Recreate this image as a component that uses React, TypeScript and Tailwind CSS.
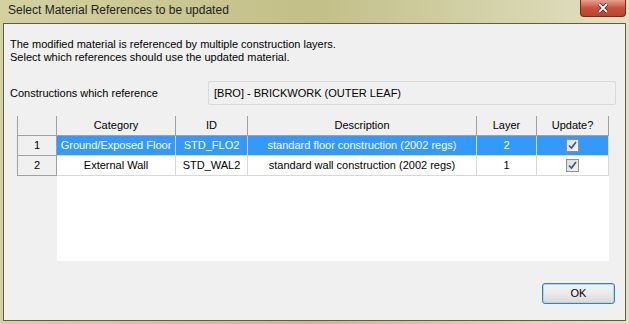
import React from "react"

const font = { fontFamily: '"Liberation Sans", Arial, sans-serif' }

const rows = [
  { n: 1, category: "Ground/Exposed Floor", id: "STD_FLO2", desc: "standard floor construction (2002 regs)", layer: 2, selected: true },
  { n: 2, category: "External Wall", id: "STD_WAL2", desc: "standard wall construction (2002 regs)", layer: 1, selected: false },
]

const Check = () => (
  <span className="inline-flex items-center justify-center w-[13px] h-[13px] border border-[#8f8f8f] bg-gradient-to-br from-[#dcdcdc] to-[#f6f6f6]">
    <svg width="9" height="9" viewBox="0 0 9 9">
      <path d="M1 4.5 L3.5 7 L8 1" fill="none" stroke="#3d4f9a" strokeWidth="1.6" />
    </svg>
  </span>
)

export default function App() {
  return (
    <div
      className="w-[629px] h-[324px] flex flex-col bg-gradient-to-r from-[#d3d1a0] via-[#c2bf88] to-[#e2e1c3] text-[11px] text-black overflow-hidden"
      style={font}
    >
      {/* title bar */}
      <div className="h-[23px] flex items-center justify-between pl-[8px] pr-[3px] shrink-0">
        <span className="text-[12px] text-[#1e1e1e] -mt-[3px]">Select Material References to be updated</span>
        <button className="self-start w-[46px] h-[17px] rounded-b-[4px] border border-[#7a2a1c] border-t-0 bg-gradient-to-b from-[#e5a08e] via-[#c9503a] to-[#b8442f] flex items-center justify-center">
          <svg width="12" height="10" viewBox="0 0 12 10">
            <path d="M2 1 L10 9 M10 1 L2 9" stroke="#4a1a10" strokeWidth="3.2" />
            <path d="M2 1 L10 9 M10 1 L2 9" stroke="#ffffff" strokeWidth="1.8" />
          </svg>
        </button>
      </div>

      {/* client area */}
      <div className="mx-[3px] mb-[3px] flex-1 border border-[#5e5e4c] bg-[#f0f0f0] flex flex-col">
        <div className="pl-[6px] pt-[14px] leading-[13px]">
          <p>The modified material is referenced by multiple construction layers.</p>
          <p>Select which references should use the updated material.</p>
        </div>

        <div className="flex items-center pl-[6px] mt-[17px] pr-[9px]">
          <span className="w-[198px]">Constructions which reference</span>
          <div className="flex-1 h-[24px] border border-[#d9d9d9] rounded-[2px] bg-[#f0f0f0] flex items-center pl-[5px]">
            [BRO] - BRICKWORK (OUTER LEAF)
          </div>
        </div>

        {/* grid */}
        <div className="ml-[13px] mt-[11px] w-[592px] flex flex-col">
          <div className="flex h-[20px]">
            {[
              ["", "w-[40px]"],
              ["Category", "w-[119px]"],
              ["ID", "w-[72px]"],
              ["Description", "w-[229px]"],
              ["Layer", "w-[60px]"],
              ["Update?", "w-[72px]"],
            ].map(([t, w], i) => (
              <div
                key={i}
                className={`${w} border-r border-b border-[#a0a0a0] bg-[#f0f0f0] flex items-center justify-center ${i === 0 ? "border-l" : ""}`}
              >
                {t}
              </div>
            ))}
          </div>
          {rows.map((r) => (
            <div key={r.n} className="flex h-[20px]">
              <div className="w-[40px] border-l border-r border-b border-[#a0a0a0] bg-[#f0f0f0] flex items-center justify-center">
                {r.n}
              </div>
              <div className={`flex ${r.selected ? "bg-[#3399ff] text-white" : "bg-white text-black"}`}>
                <div className="w-[119px] border-r border-b border-[#d8d8d8] flex items-center justify-center">{r.category}</div>
                <div className="w-[72px] border-r border-b border-[#d8d8d8] flex items-center justify-center">{r.id}</div>
                <div className="w-[229px] border-r border-b border-[#d8d8d8] flex items-center justify-center">{r.desc}</div>
                <div className="w-[60px] border-r border-b border-[#d8d8d8] flex items-center justify-center">{r.layer}</div>
                <div className="w-[72px] border-r border-b border-[#d8d8d8] flex items-center justify-center">
                  <Check />
                </div>
              </div>
            </div>
          ))}
          <div className="flex">
            <div className="w-[40px]" />
            <div className="w-[552px] h-[85px] bg-white" />
          </div>
        </div>

        <div className="flex justify-end mt-[22px] pr-[10px]">
          <button className="w-[73px] h-[21px] rounded-[3px] border border-[#3c7fb1] bg-gradient-to-b from-[#f2f2f2] via-[#ebebeb] to-[#d8d8d8] shadow-[inset_0_0_0_1px_#9fdcf4] flex items-center justify-center text-[11px]">
            OK
          </button>
        </div>
      </div>
    </div>
  )
}
